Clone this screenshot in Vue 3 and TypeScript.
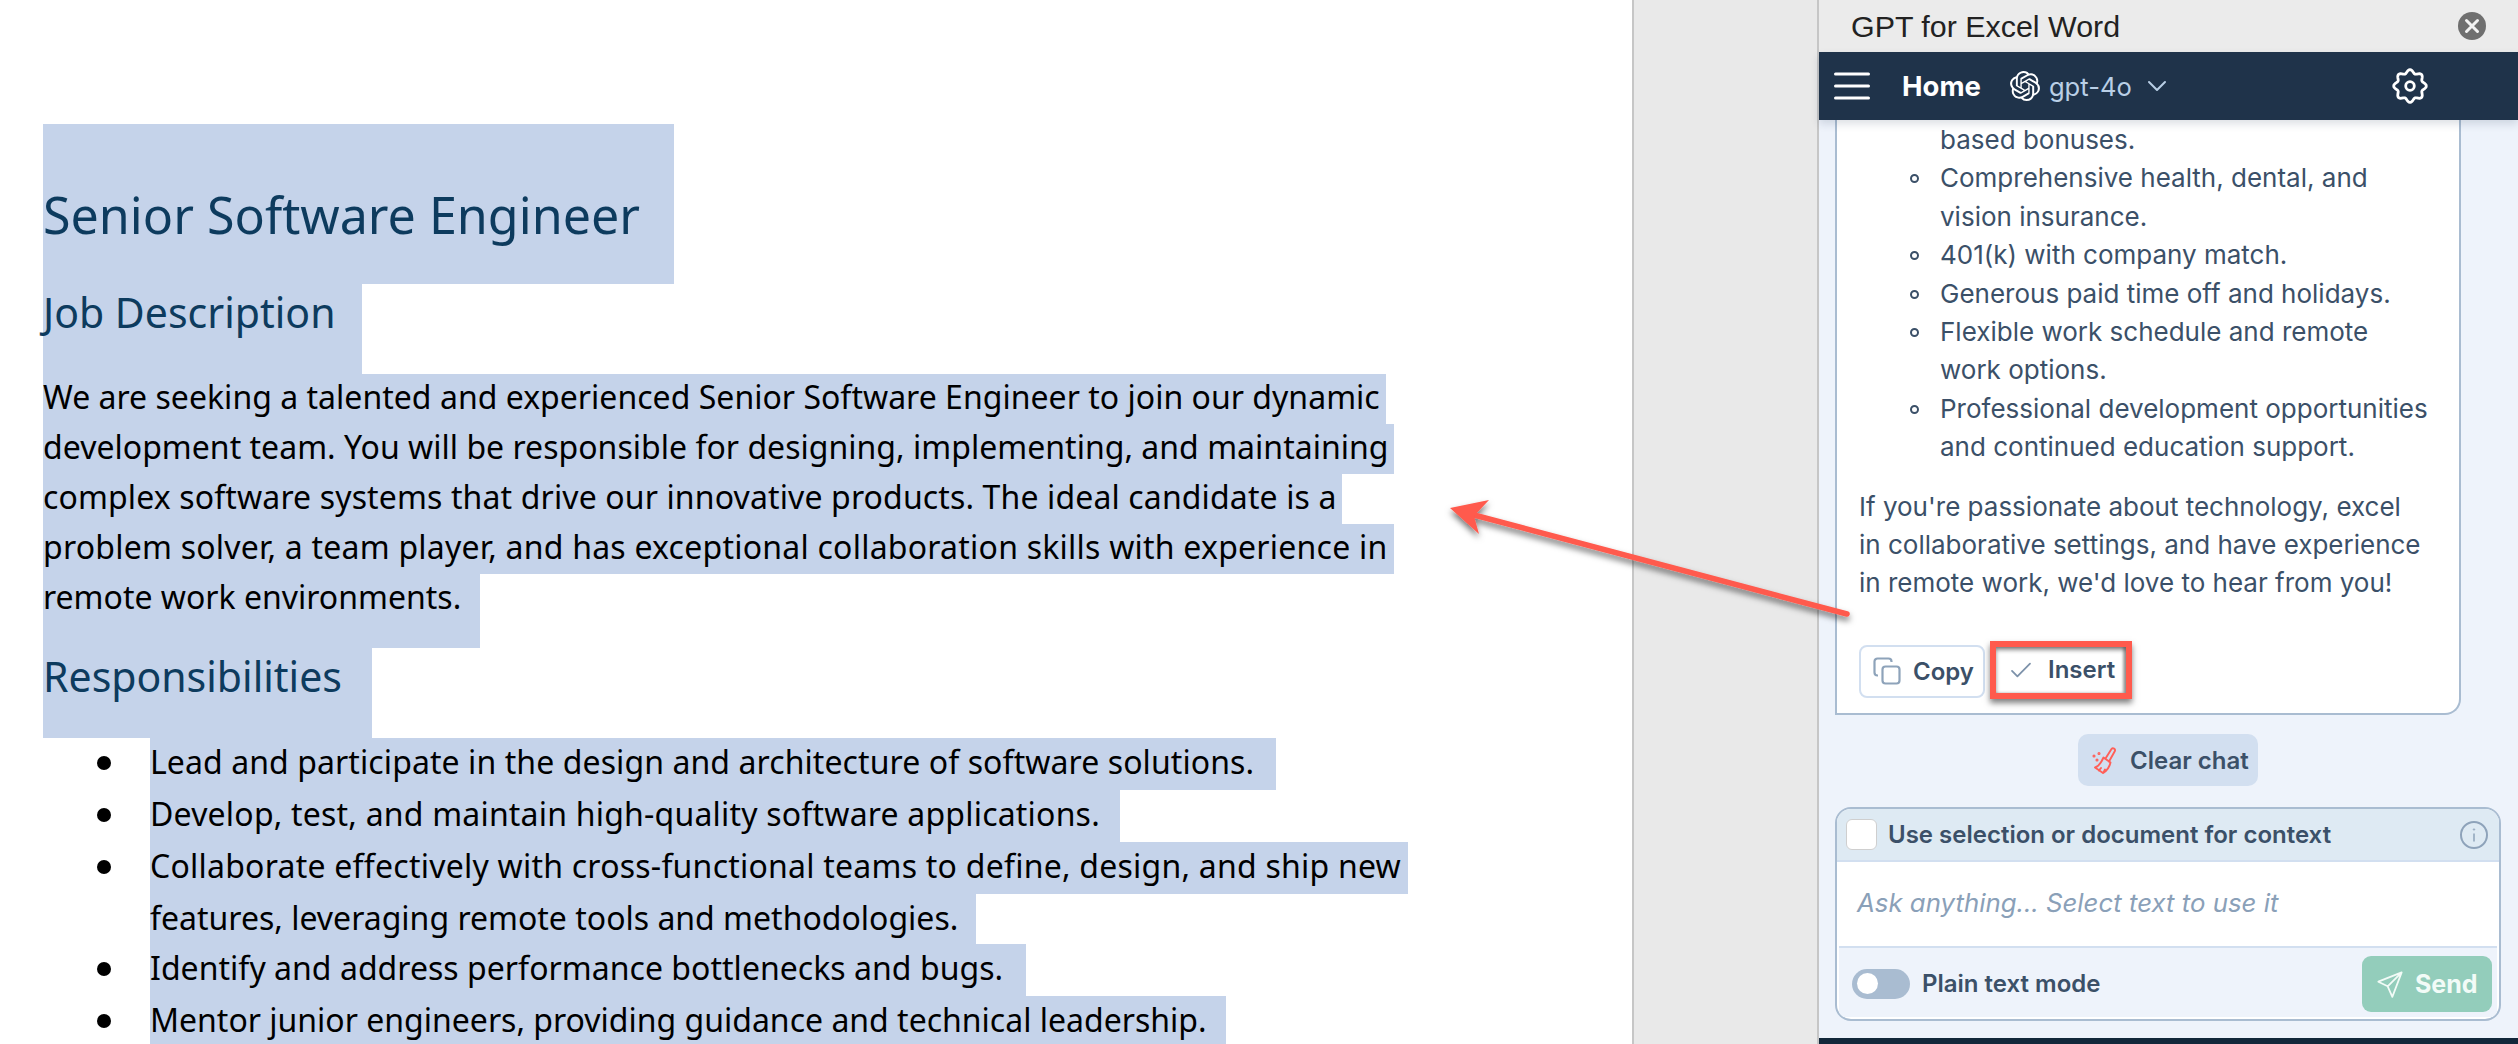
<script setup lang="ts">
interface DocLine { text: string; width: number; ls?: number }
interface DocItem { lines: DocLine[] }

const intro: DocLine[] = [
  { text: 'We are seeking a talented and experienced Senior Software Engineer to join our dynamic', width: 1343, ls: 0.02 },
  { text: 'development team. You will be responsible for designing, implementing, and maintaining', width: 1351, ls: 0.02 },
  { text: 'complex software systems that drive our innovative products. The ideal candidate is a', width: 1299, ls: 0.13 },
  { text: 'problem solver, a team player, and has exceptional collaboration skills with experience in', width: 1351, ls: 0.23 },
  { text: 'remote work environments.', width: 437 },
]
const items: DocItem[] = [
  { lines: [{ text: 'Lead and participate in the design and architecture of software solutions.', width: 1126, ls: 0.085 }] },
  { lines: [{ text: 'Develop, test, and maintain high-quality software applications.', width: 970, ls: 0.2 }] },
  { lines: [
    { text: 'Collaborate effectively with cross-functional teams to define, design, and ship new', width: 1258, ls: 0.23 },
    { text: 'features, leveraging remote tools and methodologies.', width: 826 },
  ] },
  { lines: [{ text: 'Identify and address performance bottlenecks and bugs.', width: 876, ls: 0.03 }] },
  { lines: [{ text: 'Mentor junior engineers, providing guidance and technical leadership.', width: 1076 }] },
]
const benefits: string[] = [
  'Comprehensive health, dental, and vision insurance.',
  '401(k) with company match.',
  'Generous paid time off and holidays.',
  'Flexible work schedule and remote work options.',
  'Professional development opportunities and continued education support.',
]
const lineStyle = (l: DocLine) => ({ width: l.width + 'px', letterSpacing: (l.ls ?? 0) + 'px' })

// eight-lobed gear outline, as a closed polar curve
const gearPath = Array.from({ length: 96 }, (_, i) => {
  const t = (i / 96) * Math.PI * 2
  const r = 14.6 + 1.7 * Math.cos(8 * t)
  return `${i ? 'L' : 'M'}${(18 + r * Math.sin(t)).toFixed(2)} ${(18 - r * Math.cos(t)).toFixed(2)}`
}).join('') + 'Z'
</script>

<template>
  <div class="page">
    <main class="doc">
      <h1 class="sel h1">Senior Software Engineer</h1>
      <h2 class="sel h2 jd">Job Description</h2>
      <p v-for="l in intro" :key="l.text" class="sel body" :style="lineStyle(l)">{{ l.text }}</p>
      <h2 class="sel h2 resp">Responsibilities</h2>
      <ul class="doc-list">
        <li v-for="it in items" :key="it.lines[0].text" class="doc-item">
          <p v-for="l in it.lines" :key="l.text" class="sel item-line" :style="lineStyle(l)">{{ l.text }}</p>
        </li>
      </ul>
    </main>

    <div class="gutter"></div>

    <aside class="panel">
      <header class="titlebar">
        <span class="title">GPT for Excel Word</span>
        <span class="close">
          <svg viewBox="0 0 28 28" width="28" height="28"><path d="M8.500 8.500l11 11M19.500 8.500l-11 11" stroke="#f2f2f2" stroke-width="3" stroke-linecap="round" fill="none"/></svg>
        </span>
      </header>
      <nav class="nav">
        <svg class="burger" viewBox="0 0 36 28" width="36" height="28"><path d="M1.500 2h33M1.500 14h33M1.500 26h33" stroke="#fff" stroke-width="3" stroke-linecap="round"/></svg>
        <span class="home">Home</span>
        <svg class="oai" viewBox="0 0 24 24" width="30" height="30" fill="#fff"><path d="M22.2819 9.8211a5.9847 5.9847 0 0 0-.5157-4.9108 6.0462 6.0462 0 0 0-6.5098-2.9A6.0651 6.0651 0 0 0 4.9807 4.1818a5.9847 5.9847 0 0 0-3.9977 2.9 6.0462 6.0462 0 0 0 .7427 7.0966 5.98 5.98 0 0 0 .511 4.9107 6.051 6.051 0 0 0 6.5146 2.9001A5.9847 5.9847 0 0 0 13.2599 24a6.0557 6.0557 0 0 0 5.7718-4.2058 5.9894 5.9894 0 0 0 3.9977-2.9001 6.0557 6.0557 0 0 0-.7475-7.0729zm-9.022 12.6081a4.4755 4.4755 0 0 1-2.8764-1.0408l.1419-.0804 4.7783-2.7582a.7948.7948 0 0 0 .3927-.6813v-6.7369l2.02 1.1686a.071.071 0 0 1 .038.052v5.5826a4.504 4.504 0 0 1-4.4945 4.4944zm-9.6607-4.1254a4.4708 4.4708 0 0 1-.5346-3.0137l.142.0852 4.783 2.7582a.7712.7712 0 0 0 .7806 0l5.8428-3.3685v2.3324a.0804.0804 0 0 1-.0332.0615L9.74 19.9502a4.4992 4.4992 0 0 1-6.1408-1.6464zM2.3408 7.8956a4.485 4.485 0 0 1 2.3655-1.9728V11.6a.7664.7664 0 0 0 .3879.6765l5.8144 3.3543-2.0201 1.1685a.0757.0757 0 0 1-.071 0l-4.8303-2.7865A4.504 4.504 0 0 1 2.3408 7.872zm16.5963 3.8558L13.1038 8.364 15.1192 7.2a.0757.0757 0 0 1 .071 0l4.8303 2.7913a4.4944 4.4944 0 0 1-.6765 8.1042v-5.6772a.79.79 0 0 0-.407-.667zm2.0107-3.0231l-.142-.0852-4.7735-2.7818a.7759.7759 0 0 0-.7854 0L9.409 9.2297V6.8974a.0662.0662 0 0 1 .0284-.0615l4.8303-2.7866a4.4992 4.4992 0 0 1 6.6802 4.66zM8.3065 12.863l-2.02-1.1638a.0804.0804 0 0 1-.038-.0567V6.0742a4.4992 4.4992 0 0 1 7.3757-3.4537l-.142.0805L8.704 5.459a.7948.7948 0 0 0-.3927.6813zm1.0976-2.3654l2.602-1.4998 2.6069 1.4998v2.9994l-2.5974 1.4997-2.6067-1.4997Z"/></svg>
        <span class="model">gpt-4o</span>
        <svg class="chev" viewBox="0 0 20 12" width="20" height="12"><path d="M2 2l8 8 8-8" stroke="#b9cfe6" stroke-width="2" stroke-linecap="round" stroke-linejoin="round" fill="none"/></svg>
        <svg class="gear" viewBox="0 0 36 36" width="36" height="36" fill="none" stroke="#fff" stroke-width="2.800" stroke-linejoin="round"><path :d="gearPath"/><circle cx="18" cy="18" r="4.300"/></svg>
      </nav>

      <section class="chat">
        <div class="card">
          <ul class="benefits">
            <li class="cont">based bonuses.</li>
            <li v-for="b in benefits" :key="b" class="benefit">{{ b }}</li>
          </ul>
          <p class="outro">If you're passionate about technology, excel in collaborative settings, and have experience in remote work, we'd love to hear from you!</p>
          <div class="actions">
            <button class="act copy">
              <svg viewBox="0 0 28 28" width="28" height="28" fill="none" stroke="#8ea3ba" stroke-width="2.200" stroke-linejoin="round"><rect x="9.500" y="9.500" width="17" height="17" rx="3"/><path d="M5 18.500H4.500a3 3 0 0 1-3-3v-11a3 3 0 0 1 3-3h11a3 3 0 0 1 3 3V5"/></svg>
              <span>Copy</span>
            </button>
            <button class="act insert">
              <svg viewBox="0 0 24 20" width="22" height="18" fill="none" stroke="#7d92aa" stroke-width="2" stroke-linecap="round" stroke-linejoin="round"><path d="M2 11l6 6L22 3"/></svg>
              <span>Insert</span>
            </button>
          </div>
        </div>

        <button class="clear">
          <svg viewBox="0 0 26 28" width="26" height="28" fill="none" stroke="#ff5f58" stroke-width="1.900" stroke-linecap="round" stroke-linejoin="round"><path d="M11.500 11.500L18.500 16.500C17.500 21 14.500 25 11 27L3 21.500C7 20.500 9.500 16 11.500 11.500Z"/><path d="M13.500 12.500L19.500 3a2 2 0 0 1 3.400 2L17 15.500M7 24.500l2-2.500M11.500 26.500l1.500-3"/><circle cx="2" cy="10" r=".6"/><circle cx="5" cy="14" r=".6"/><circle cx="7" cy="7.500" r=".6"/></svg>
          <span>Clear chat</span>
        </button>

        <div class="composer">
          <div class="ctx">
            <span class="check"></span>
            <span class="ctx-label">Use selection or document for context</span>
            <svg class="info" viewBox="0 0 30 30" width="30" height="30" fill="none" stroke="#8ea3ba" stroke-width="2"><circle cx="15" cy="15" r="13"/><path d="M15 13.500v8" stroke-width="1.500"/><circle cx="15" cy="9.500" r=".7" stroke-width="1"/></svg>
          </div>
          <div class="ask">Ask anything... Select text to use it</div>
          <div class="foot">
            <span class="toggle"><span class="knob"></span></span>
            <span class="plain">Plain text mode</span>
            <button class="send">
              <svg viewBox="0 0 24 24" width="28" height="28" fill="none" stroke="#f2fbf7" stroke-width="1.500" stroke-linejoin="round"><path d="M22 2 2 10l8 4 4 9zM10 14 22 2"/></svg>
              <span>Send</span>
            </button>
          </div>
        </div>
        <div class="strip"></div>
      </section>
    </aside>

    <svg class="arrow" viewBox="0 0 460 170" width="460" height="170">
      <defs>
        <filter id="ds" x="-10%" y="-30%" width="120%" height="170%"><feDropShadow dx="0" dy="4" stdDeviation="3" flood-color="#000" flood-opacity=".55"/></filter>
      </defs>
      <g filter="url(#ds)">
        <path d="M427 134 54 35" stroke="#ff5a4d" stroke-width="5.500" stroke-linecap="round"/>
        <path d="M30 28 69 20 54 36 59 54z" fill="#ff5a4d"/>
      </g>
    </svg>
  </div>
</template>

<style scoped>
.page {
  position: relative;
  width: 2518px;
  height: 1044px;
  overflow: hidden;
  display: flex;
  background: #fff;
}
.doc {
  width: 1634px;
  flex: none;
  padding: 124px 0 0 43px;
  box-sizing: border-box;
  background: #fff;
  font-family: "Noto Sans", sans-serif;
  color: #000;
  border-right: 2px solid #c6c6c6;
}
.sel { background: #c5d3ea; margin: 0; box-sizing: border-box; white-space: nowrap; }
.h1 { width: 631px; height: 160px; padding-top: 58px; font-size: 50.200px; line-height: 66px; font-weight: 400; color: #0d3b5e; }
.h2 { font-weight: 400; color: #0d3b5e; font-size: 41px; }
.jd { width: 319px; height: 90px; line-height: 56px; }
.resp { width: 329px; height: 90px; line-height: 56px; }
.body { height: 50px; line-height: 45px; font-size: 32px; }
.body:nth-of-type(5) { height: 74px; }
.doc-list { list-style: none; margin: 0; padding: 0; }
.doc-item { position: relative; padding-left: 107px; }
.doc-item::before { content: ""; position: absolute; left: 54px; top: 18px; width: 14px; height: 14px; border-radius: 50%; background: #000; }
.item-line { height: 52px; line-height: 48px; font-size: 32px; }
.item-line + .item-line { height: 50px; }
.gutter { width: 185px; flex: none; background: #e9e9e9; border-right: 2px solid #c6c6c6; box-sizing: border-box; }
.panel { flex: 1; min-width: 0; display: flex; flex-direction: column; font-family: Inter, sans-serif; background: #eef3fb; }
.titlebar { height: 52px; flex: none; display: flex; align-items: center; justify-content: space-between; padding: 0 32px; background: #ebebeb; }
.title { font-family: "Liberation Sans", sans-serif; font-size: 30.400px; color: #222; }
.close { width: 28px; height: 28px; border-radius: 50%; background: #6f6f6f; display: flex; }
.nav { height: 68px; flex: none; display: flex; align-items: center; background: #1f334a; padding: 0 90px 0 15px; box-shadow: 0 4px 8px rgba(30,50,80,.15); z-index: 1; }
.burger { flex: none; }
.home { margin-left: 32px; color: #fff; font-weight: 700; font-size: 27.500px; }
.oai { margin-left: 29px; flex: none; }
.model { margin-left: 9px; color: #b9cfe6; font-size: 25.600px; }
.chev { margin-left: 15px; flex: none; }
.gear { margin-left: auto; flex: none; }
.chat { flex: 1; min-height: 0; display: flex; flex-direction: column; align-items: flex-start; }
.card { margin-left: 16px; width: 626px; height: 595px; flex: none; box-sizing: border-box; background: #fff; border: 2px solid #a9bcd1; border-top: 0; border-bottom-right-radius: 16px; padding: 1px 33px 0 22px; color: #3b5068; font-size: 26px; line-height: 38.400px; display: flex; flex-direction: column; }
.benefits { margin: 0 -6px 0 0; padding: 0 0 0 81px; list-style: none; }
.benefit { position: relative; }
.benefit::before { content: ""; position: absolute; left: -30px; top: 15px; width: 9px; height: 9px; box-sizing: border-box; border: 2px solid #3b5068; border-radius: 50%; }
.outro { margin: 21px 0 0; }
.actions { display: flex; gap: 5px; margin-top: 42px; align-items: flex-start; }
.act { box-sizing: border-box; background: #fff; display: flex; align-items: center; font: 600 24px Inter, sans-serif; color: #3b5068; padding: 0; }
.copy { width: 126px; height: 53px; border-radius: 8px; border: 2px solid #d2dff0; padding-left: 12px; gap: 12px; }
.insert { width: 142px; height: 58px; margin-top: -4px; border: 6px solid #ff5a4d; border-radius: 0; padding-left: 14px; gap: 16px; box-shadow: 0 4px 6px rgba(0,0,0,.5), inset 0 3px 4px rgba(0,0,0,.45), inset -3px 0 3px rgba(0,0,0,.3); }
.clear { margin: 19px 0 0 259px; width: 180px; height: 52px; flex: none; border: 0; border-radius: 10px; background: #d2dff0; display: flex; align-items: center; gap: 12px; padding: 0 0 0 14px; font: 600 24px Inter, sans-serif; color: #3b5068; }
.composer { margin: 21px 0 0 16px; width: 666px; height: 214px; flex: none; box-sizing: border-box; border: 2px solid #a9bcd1; border-radius: 16px; overflow: hidden; display: flex; flex-direction: column; background: #fff; }
.ctx { height: 53px; flex: none; box-sizing: border-box; background: #deeaf3; border-bottom: 2px solid #d2dff0; display: flex; align-items: center; padding: 0 10px 0 9px; color: #3b5068; font-weight: 600; font-size: 24px; }
.check { width: 31px; height: 31px; box-sizing: border-box; background: #fff; border: 1px solid #cfcfcf; border-radius: 6px; flex: none; }
.ctx-label { margin-left: 11px; }
.info { margin-left: auto; }
.ask { height: 84px; flex: none; box-sizing: border-box; padding: 0 0 4px 20px; display: flex; align-items: center; font-style: italic; font-size: 25.800px; color: #8aa0b8; background: #fff; }
.foot { height: 71px; flex: none; box-sizing: border-box; border-top: 2px solid #d2dff0; margin: 0 2px; padding: 2px 5px 0 13px; background: #eef3fb; display: flex; align-items: center; color: #3b5068; font-weight: 600; font-size: 24px; }
.toggle { width: 58px; height: 30px; background: #a9bcd1; border-radius: 15px; display: flex; align-items: center; padding-left: 5px; box-sizing: border-box; }
.knob { width: 21px; height: 21px; border-radius: 50%; background: #fff; }
.plain { margin-left: 12px; }
.send { margin-left: auto; width: 130px; height: 56px; border: 0; border-radius: 9px; background: #93cdbb; color: #f2fbf7; display: flex; align-items: center; gap: 11px; font: 700 25px Inter, sans-serif; padding: 0 0 0 14px; }
.strip { margin-top: auto; width: 100%; height: 6px; flex: none; background: #12273a; }
.arrow { position: absolute; left: 1420px; top: 480px; pointer-events: none; }
</style>
